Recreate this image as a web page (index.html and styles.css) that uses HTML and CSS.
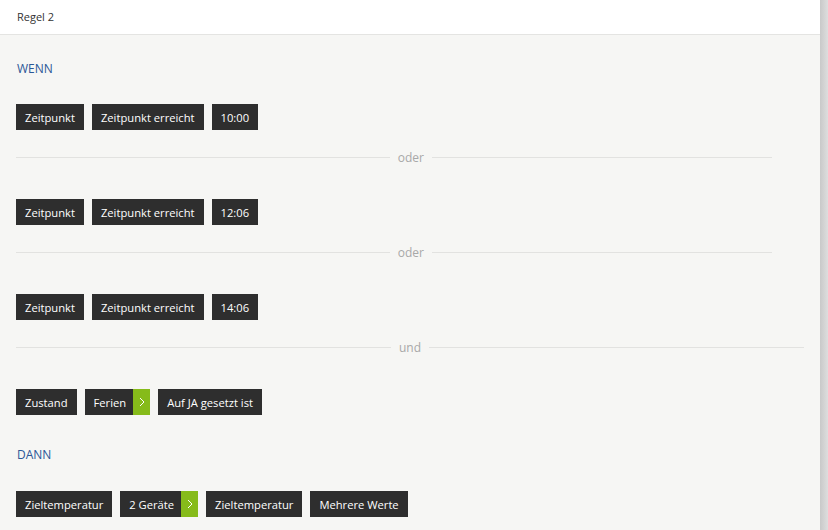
FILE: index.html
```html
<!DOCTYPE html>
<html lang="de">
<head>
    <meta charset="UTF-8">
    <title>Regel 2</title>
    <link rel="stylesheet" href="styles.css">
</head>
<body>
    <div class="panel">
        <div class="panel-header">Regel 2</div>
        <div class="panel-body">
            <h3 class="section-title">WENN</h3>

            <div class="chip-row">
                <span class="chip">Zeitpunkt</span>
                <span class="chip">Zeitpunkt erreicht</span>
                <span class="chip">10:00</span>
            </div>

            <div class="separator short"><span>oder</span></div>

            <div class="chip-row">
                <span class="chip">Zeitpunkt</span>
                <span class="chip">Zeitpunkt erreicht</span>
                <span class="chip">12:06</span>
            </div>

            <div class="separator short"><span>oder</span></div>

            <div class="chip-row">
                <span class="chip">Zeitpunkt</span>
                <span class="chip">Zeitpunkt erreicht</span>
                <span class="chip">14:06</span>
            </div>

            <div class="separator"><span>und</span></div>

            <div class="chip-row">
                <span class="chip">Zustand</span>
                <span class="chip has-arrow">Ferien<i class="chip-arrow"><svg width="6" height="10" viewBox="0 0 6 10"><path d="M1 1 L5 5 L1 9" fill="none" stroke="#fff" stroke-width="1"/></svg></i></span>
                <span class="chip">Auf JA gesetzt ist</span>
            </div>

            <h3 class="section-title dann">DANN</h3>

            <div class="chip-row">
                <span class="chip">Zieltemperatur</span>
                <span class="chip has-arrow">2 Geräte<i class="chip-arrow"><svg width="6" height="10" viewBox="0 0 6 10"><path d="M1 1 L5 5 L1 9" fill="none" stroke="#fff" stroke-width="1"/></svg></i></span>
                <span class="chip">Zieltemperatur</span>
                <span class="chip">Mehrere Werte</span>
            </div>
        </div>
    </div>
    <div class="scroll-edge"></div>
</body>
</html>
```

FILE: styles.css
```css
body, html {
    margin: 0;
    padding: 0;
    height: 100%;
    overflow: hidden;
    font-family: 'Open Sans', sans-serif;
    background-color: #f6f6f4;
}

body {
    display: flex;
}

.panel {
    width: 820px;
    height: 100%;
}

.scroll-edge {
    width: 8px;
    height: 100%;
    background: linear-gradient(to right, #c9c9c9, #dedede);
}

.panel-header {
    height: 34px;
    line-height: 34px;
    padding-left: 17px;
    background-color: #fff;
    border-bottom: 1px solid #e4e4e2;
    font-size: 11px;
    color: #333;
}

.panel-body {
    display: flex;
    flex-direction: column;
    align-items: flex-start;
    padding: 25px 16px 0 16px;
}

.section-title {
    margin: 0 0 0 1px;
    font-size: 12px;
    font-weight: normal;
    color: #2b5797;
    line-height: 18px;
}

.section-title.dann {
    margin-top: 31px;
    margin-bottom: 1px;
}

.chip-row {
    display: flex;
    gap: 8px;
    margin-top: 26px;
}

.chip {
    display: flex;
    align-items: center;
    height: 26px;
    padding: 0 9px;
    background-color: #2e2e2e;
    color: #fff;
    font-size: 11.2px;
}

.chip.has-arrow {
    padding-right: 0;
}

.chip-arrow {
    display: flex;
    align-items: center;
    justify-content: center;
    width: 17px;
    height: 26px;
    margin-left: 7px;
    background-color: #86bb1a;
}

.separator {
    display: flex;
    align-items: center;
    align-self: stretch;
    height: 18px;
    margin: 18px 0 7px 0;
    font-size: 12px;
    color: #a8a8a8;
}

.separator::before,
.separator::after {
    content: '';
    flex: 1;
    height: 1px;
    background-color: #e2e2e0;
}

.separator span {
    padding: 0 8px;
}

.separator.short::after {
    margin-right: 32px;
    flex: 0 0 340px;
}
```
